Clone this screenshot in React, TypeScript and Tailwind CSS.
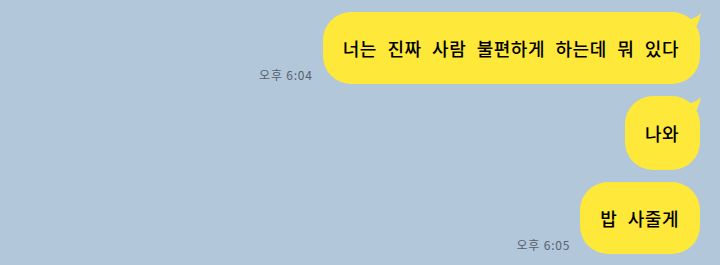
const font = { fontFamily: '"Noto Sans CJK KR", "Noto Sans", sans-serif' };

const Tail = () => (
  <svg className="absolute right-[-8px] top-[0px]" width="22" height="22" viewBox="0 0 22 22">
    <path d="M2 8 C8 6 13 4 15 1 C14 6 12 12 8 20 Z" fill="#fee83a" />
  </svg>
);

type Msg = { text: string; time?: string; tail?: boolean; h: string };

const messages: Msg[] = [
  { text: "너는 진짜 사람 불편하게 하는데 뭐 있다", time: "오후 6:04", tail: true, h: "h-[72px]" },
  { text: "나와", tail: true, h: "h-[74px]" },
  { text: "밥 사줄게", time: "오후 6:05", h: "h-[72px]" },
];

const App = () => {
  return (
    <div className="w-[720px] h-[265px] bg-[#b2c7da] overflow-hidden flex flex-col items-end gap-3 pt-3 pr-5" style={font}>
      {messages.map((m) => (
        <div key={m.text} className="flex items-end gap-[10px]">
          {m.time && <span className="text-[12px] text-[#56616e] pb-[3px] leading-none tracking-[0.8px]">{m.time}</span>}
          <div className={`relative ${m.h} flex items-center pl-[20px] pr-[21px] bg-[#fee83a] rounded-[28px]`}>
            {m.tail && <Tail />}
            <span className="text-[18px] text-black font-medium tracking-[0.5px] [word-spacing:6px]">{m.text}</span>
          </div>
        </div>
      ))}
    </div>
  );
};

export default App;
